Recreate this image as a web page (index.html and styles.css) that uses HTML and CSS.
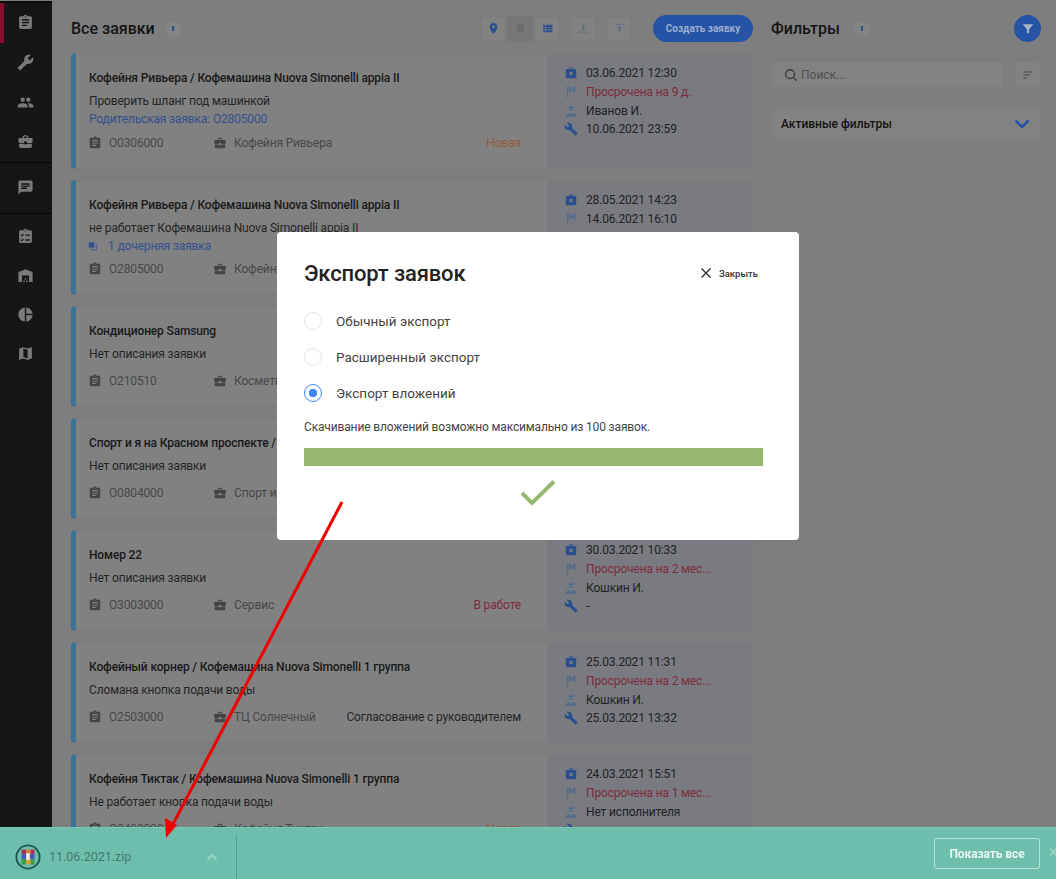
FILE: index.html
```html
<!DOCTYPE html>
<html lang="ru">
<head>
  <meta charset="UTF-8" />
  <meta name="viewport" content="width=device-width, initial-scale=1.0"/>
  <title>Все заявки</title>
  <link rel="stylesheet" href="styles.css">
</head>
<body>
  <svg class="sprite" xmlns="http://www.w3.org/2000/svg">
    <symbol id="i-assignment" viewBox="0 0 24 24"><path d="M19 3h-4.18C14.4 1.84 13.3 1 12 1c-1.3 0-2.4.84-2.82 2H5c-1.1 0-2 .9-2 2v14c0 1.1.9 2 2 2h14c1.1 0 2-.9 2-2V5c0-1.1-.9-2-2-2zm-7 0c.55 0 1 .45 1 1s-.45 1-1 1-1-.45-1-1 .45-1 1-1zm2 14H7v-2h7v2zm3-4H7v-2h10v2zm0-4H7V7h10v2z"/></symbol>
    <symbol id="i-wrench" viewBox="0 0 24 24"><path d="M22.7 19l-9.1-9.1c.9-2.3.4-5-1.5-6.9-2-2-5-2.4-7.4-1.3L9 6 6 9 1.6 4.7C.4 7.1.9 10.1 2.9 12.1c1.9 1.9 4.6 2.4 6.9 1.5l9.1 9.1c.4.4 1 .4 1.4 0l2.3-2.3c.5-.4.5-1.1.1-1.4z"/></symbol>
    <symbol id="i-people" viewBox="0 0 24 24"><path d="M16 11c1.66 0 2.99-1.34 2.99-3S17.66 5 16 5c-1.66 0-3 1.34-3 3s1.34 3 3 3zm-8 0c1.66 0 2.99-1.34 2.99-3S9.66 5 8 5C6.34 5 5 6.34 5 8s1.34 3 3 3zm0 2c-2.33 0-7 1.17-7 3.5V19h14v-2.5c0-2.33-4.67-3.5-7-3.5zm8 0c-.29 0-.62.02-.97.05 1.16.84 1.97 1.97 1.97 3.45V19h6v-2.5c0-2.33-4.67-3.5-7-3.5z"/></symbol>
    <symbol id="i-case" viewBox="0 0 24 24"><path d="M10 16v-1H3.01L3 19c0 1.11.89 2 2 2h14c1.11 0 2-.89 2-2v-4h-7v1h-4zm10-9h-4.01V5l-2-2h-4l-2 2v2H4c-1.1 0-2 .9-2 2v3c0 1.11.89 2 2 2h6v-2h4v2h6c1.1 0 2-.9 2-2V9c0-1.1-.9-2-2-2zm-6 0h-4V5h4v2z"/></symbol>
    <symbol id="i-chat" viewBox="0 0 24 24"><path d="M20 2H4c-1.1 0-1.99.9-1.99 2L2 22l4-4h14c1.1 0 2-.9 2-2V4c0-1.1-.9-2-2-2zM6 9h12v2H6V9zm8 5H6v-2h8v2zm4-6H6V6h12v2z"/></symbol>
    <symbol id="i-checklist" viewBox="0 0 24 24"><path fill-rule="evenodd" d="M19 3h-4.180C14.400 1.840 13.300 1 12 1c-1.300 0-2.400.840-2.820 2H5c-1.100 0-2 .900-2 2v14c0 1.100.900 2 2 2h14c1.100 0 2-.900 2-2V5c0-1.100-.900-2-2-2zm-7 0a1 1 0 1 1 0 2 1 1 0 0 1 0-2zM6 9l1 1 2-2 1 1-3 3-2-2zm0 7l1 1 2-2 1 1-3 3-2-2zm6-7h6v2h-6zm0 7h6v2h-6z"/></symbol>
    <symbol id="i-warehouse" viewBox="0 0 24 24"><path d="M22 21V7L12 3 2 7v14h5v-9h10v9h5zm-11-2H9v2h2v-2zm2-3h-2v2h2v-2zm2 3h-2v2h2v-2z"/></symbol>
    <symbol id="i-pie" viewBox="0 0 24 24"><path d="M11 2v20c-5.07-.5-9-4.79-9-10s3.93-9.5 9-10zm2.03 0v8.99H22c-.47-4.74-4.24-8.52-8.97-8.99zm0 11.01V22c4.74-.47 8.5-4.25 8.97-8.99h-8.97z"/></symbol>
    <symbol id="i-map" viewBox="0 0 24 24"><path d="M20.5 3l-.16.03L15 5.1 9 3 3.36 4.9c-.21.07-.36.25-.36.48V20.5c0 .28.22.5.5.5l.16-.03L9 18.9l6 2.1 5.64-1.9c.21-.07.36-.25.36-.48V3.5c0-.28-.22-.5-.5-.5zM15 19l-6-2.11V5l6 2.11V19z"/></symbol>
    <symbol id="i-place" viewBox="0 0 24 24"><path d="M12 2C8.13 2 5 5.13 5 9c0 5.25 7 13 7 13s7-7.75 7-13c0-3.87-3.13-7-7-7zm0 9.5c-1.38 0-2.5-1.12-2.5-2.5s1.12-2.5 2.5-2.5 2.5 1.12 2.5 2.5-1.12 2.5-2.5 2.5z"/></symbol>
    <symbol id="i-square" viewBox="0 0 24 24"><path d="M4 4h16v16H4z"/></symbol>
    <symbol id="i-list" viewBox="0 0 24 24"><path d="M4 14h4v-4H4v4zm0 5h4v-4H4v4zM4 9h4V5H4v4zm5 5h12v-4H9v4zm0 5h12v-4H9v4zM9 5v4h12V5H9z"/></symbol>
    <symbol id="i-down" viewBox="0 0 24 24"><path d="M11 4h2v7h3l-4 4-4-4h3zM3 18h18v1.5H3z"/></symbol>
    <symbol id="i-up" viewBox="0 0 24 24"><path d="M3 4h18v1.5H3zM12 8l4 4h-3v7h-2v-7H8z"/></symbol>
    <symbol id="i-filter" viewBox="0 0 24 24"><path d="M3 4h18l-7 8.5V20l-4-2v-5.500z"/></symbol>
    <symbol id="i-sort" viewBox="0 0 24 24"><path d="M3 5h18v2H3zm0 6h12v2H3zm0 6h6v2H3z"/></symbol>
    <symbol id="i-created" viewBox="0 0 24 24"><path fill-rule="evenodd" d="M9 2h6v3h4a2 2 0 0 1 2 2v12a2 2 0 0 1-2 2H5a2 2 0 0 1-2-2V7a2 2 0 0 1 2-2h4zm1.500 1.500V5h3V3.500zM12 10a3 3 0 1 0 0 6 3 3 0 0 0 0-6z"/></symbol>
    <symbol id="i-flag" viewBox="0 0 24 24"><path fill-rule="evenodd" d="M5 2h2v20H5zM8 3h4v3h4V3h5l-2 5 2 5h-5v-3h-4v3H8z"/></symbol>
    <symbol id="i-worker" viewBox="0 0 24 24"><path d="M12 2l1 1.500 4 1.500v2H7V5l4-1.500zM8 8h8a4 4 0 0 1-8 0zM3 22c0-4 3-7 6-7l3 3 3-3c3 0 6 3 6 7z"/></symbol>
    <symbol id="i-linked" viewBox="0 0 24 24"><path d="M2 3h13v13H2z"/><path d="M17 9h5v13H9v-5h1.500v3.500h10v-10H17z"/></symbol>
  </svg>

  <div class="app">
    <nav class="sidebar">
      <div class="nav-group nav-main">
        <a class="nav-item active"><svg class="nav-icon"><use href="#i-assignment"/></svg></a>
        <a class="nav-item"><svg class="nav-icon flip"><use href="#i-wrench"/></svg></a>
        <a class="nav-item"><svg class="nav-icon"><use href="#i-people"/></svg></a>
        <a class="nav-item"><svg class="nav-icon"><use href="#i-case"/></svg></a>
      </div>
      <div class="nav-group nav-chat">
        <a class="nav-item"><svg class="nav-icon"><use href="#i-chat"/></svg></a>
      </div>
      <div class="nav-group nav-extra">
        <a class="nav-item"><svg class="nav-icon"><use href="#i-checklist"/></svg></a>
        <a class="nav-item"><svg class="nav-icon"><use href="#i-warehouse"/></svg></a>
        <a class="nav-item"><svg class="nav-icon"><use href="#i-pie"/></svg></a>
        <a class="nav-item"><svg class="nav-icon"><use href="#i-map"/></svg></a>
      </div>
    </nav>

    <main class="orders">
      <header class="head">
        <h2 class="head-title">Все заявки</h2>
        <span class="count"><i></i></span>
        <div class="tools">
          <div class="tool-group">
            <button class="tool"><svg><use href="#i-place"/></svg></button>
            <button class="tool selected"><svg><use href="#i-square"/></svg></button>
            <button class="tool"><svg><use href="#i-list"/></svg></button>
          </div>
          <button class="tool faint"><svg><use href="#i-down"/></svg></button>
          <button class="tool faint"><svg><use href="#i-up"/></svg></button>
          <button class="create">Создать заявку</button>
        </div>
      </header>

      <article class="card">
        <div class="card-body">
          <div class="card-title">Кофейня Ривьера / Кофемашина Nuova Simonelli appia II</div>
          <div class="card-desc">Проверить шланг под машинкой</div>
          <div class="card-link">Родительская заявка: O2805000</div>
          <div class="card-meta">
            <span class="meta-id"><svg><use href="#i-assignment"/></svg>O0306000</span>
            <span class="meta-place"><svg><use href="#i-case"/></svg>Кофейня Ривьера</span>
            <span class="status new">Новая</span>
          </div>
        </div>
        <div class="card-side">
          <div class="side-row"><svg class="blue"><use href="#i-created"/></svg><span>03.06.2021 12:30</span></div>
          <div class="side-row"><svg class="pale"><use href="#i-flag"/></svg><span class="late">Просрочена на 9 д.</span></div>
          <div class="side-row"><svg class="pale"><use href="#i-worker"/></svg><span>Иванов И.</span></div>
          <div class="side-row"><svg class="blue"><use href="#i-wrench"/></svg><span>10.06.2021 23:59</span></div>
        </div>
      </article>

      <article class="card">
        <div class="card-body">
          <div class="card-title">Кофейня Ривьера / Кофемашина Nuova Simonelli appia II</div>
          <div class="card-desc">не работает Кофемашина Nuova Simonelli appia II</div>
          <div class="card-link"><svg><use href="#i-linked"/></svg>1 дочерняя заявка</div>
          <div class="card-meta">
            <span class="meta-id"><svg><use href="#i-assignment"/></svg>O2805000</span>
            <span class="meta-place"><svg><use href="#i-case"/></svg>Кофейня Ривьера</span>
          </div>
        </div>
        <div class="card-side">
          <div class="side-row"><svg class="blue"><use href="#i-created"/></svg><span>28.05.2021 14:23</span></div>
          <div class="side-row"><svg class="pale"><use href="#i-flag"/></svg><span>14.06.2021 16:10</span></div>
        </div>
      </article>

      <article class="card">
        <div class="card-body">
          <div class="card-title">Кондиционер Samsung</div>
          <div class="card-desc">Нет описания заявки</div>
          <div class="card-meta">
            <span class="meta-id"><svg><use href="#i-assignment"/></svg>O210510</span>
            <span class="meta-place"><svg><use href="#i-case"/></svg>Косметика</span>
          </div>
        </div>
        <div class="card-side"></div>
      </article>

      <article class="card">
        <div class="card-body">
          <div class="card-title">Спорт и я на Красном проспекте /</div>
          <div class="card-desc">Нет описания заявки</div>
          <div class="card-meta">
            <span class="meta-id"><svg><use href="#i-assignment"/></svg>O0804000</span>
            <span class="meta-place"><svg><use href="#i-case"/></svg>Спорт и я</span>
          </div>
        </div>
        <div class="card-side"></div>
      </article>

      <article class="card">
        <div class="card-body">
          <div class="card-title">Номер 22</div>
          <div class="card-desc">Нет описания заявки</div>
          <div class="card-meta">
            <span class="meta-id"><svg><use href="#i-assignment"/></svg>O3003000</span>
            <span class="meta-place"><svg><use href="#i-case"/></svg>Сервис</span>
            <span class="status work">В работе</span>
          </div>
        </div>
        <div class="card-side">
          <div class="side-row"><svg class="blue"><use href="#i-created"/></svg><span>30.03.2021 10:33</span></div>
          <div class="side-row"><svg class="pale"><use href="#i-flag"/></svg><span class="late">Просрочена на 2 мес...</span></div>
          <div class="side-row"><svg class="pale"><use href="#i-worker"/></svg><span>Кошкин И.</span></div>
          <div class="side-row"><svg class="blue"><use href="#i-wrench"/></svg><span>-</span></div>
        </div>
      </article>

      <article class="card">
        <div class="card-body">
          <div class="card-title">Кофейный корнер / Кофемашина Nuova Simonelli 1 группа</div>
          <div class="card-desc">Сломана кнопка подачи воды</div>
          <div class="card-meta">
            <span class="meta-id"><svg><use href="#i-assignment"/></svg>O2503000</span>
            <span class="meta-place"><svg><use href="#i-case"/></svg>ТЦ Солнечный</span>
            <span class="status">Согласование с руководителем</span>
          </div>
        </div>
        <div class="card-side">
          <div class="side-row"><svg class="blue"><use href="#i-created"/></svg><span>25.03.2021 11:31</span></div>
          <div class="side-row"><svg class="pale"><use href="#i-flag"/></svg><span class="late">Просрочена на 2 мес...</span></div>
          <div class="side-row"><svg class="pale"><use href="#i-worker"/></svg><span>Кошкин И.</span></div>
          <div class="side-row"><svg class="blue"><use href="#i-wrench"/></svg><span>25.03.2021 13:32</span></div>
        </div>
      </article>

      <article class="card">
        <div class="card-body">
          <div class="card-title">Кофейня Тиктак / Кофемашина Nuova Simonelli 1 группа</div>
          <div class="card-desc">Не работает кнопка подачи воды</div>
          <div class="card-meta">
            <span class="meta-id"><svg><use href="#i-assignment"/></svg>O2403000</span>
            <span class="meta-place"><svg><use href="#i-case"/></svg>Кофейня Тиктак</span>
            <span class="status new">Новая</span>
          </div>
        </div>
        <div class="card-side">
          <div class="side-row"><svg class="blue"><use href="#i-created"/></svg><span>24.03.2021 15:51</span></div>
          <div class="side-row"><svg class="pale"><use href="#i-flag"/></svg><span class="late">Просрочена на 1 мес...</span></div>
          <div class="side-row"><svg class="pale"><use href="#i-worker"/></svg><span>Нет исполнителя</span></div>
          <div class="side-row"><svg class="blue"><use href="#i-wrench"/></svg><span>-</span></div>
        </div>
      </article>
    </main>

    <aside class="filters">
      <header class="head">
        <h2 class="head-title">Фильтры</h2>
        <span class="count"><i></i></span>
        <button class="filter-btn"><svg><use href="#i-filter"/></svg></button>
      </header>
      <div class="search-row">
        <div class="search">
          <svg viewBox="0 0 16 16"><circle cx="7" cy="7" r="5"/><path d="M11 11l3.500 3.500"/></svg>
          <span>Поиск...</span>
        </div>
        <button class="sort"><svg><use href="#i-sort"/></svg></button>
      </div>
      <div class="active-filters">
        <span>Активные фильтры</span>
        <svg viewBox="0 0 16 10"><path d="M1.500 1.500L8 8l6.500-6.500"/></svg>
      </div>
    </aside>
  </div>

  <section class="modal">
    <div class="modal-head">
      <h1>Экспорт заявок</h1>
      <button class="modal-close">
        <svg viewBox="0 0 10 10"><path d="M.5.5l9 9M9.500.5l-9 9"/></svg>
        Закрыть
      </button>
    </div>
    <div class="radio-list">
      <div class="radio"><span class="radio-mark"></span>Обычный экспорт</div>
      <div class="radio"><span class="radio-mark"></span>Расширенный экспорт</div>
      <div class="radio"><span class="radio-mark checked"></span>Экспорт вложений</div>
    </div>
    <p class="modal-note">Скачивание вложений возможно максимально из 100 заявок.</p>
    <div class="progress"></div>
    <svg class="done" viewBox="0 0 36 26"><path d="M2 13l10 10L34 1.500"/></svg>
  </section>

  <footer class="downloads">
    <div class="file">
      <svg class="file-icon" viewBox="0 0 28 28">
        <circle cx="14" cy="14" r="12.500" fill="none" stroke="#1d5a50" stroke-width="2"/>
        <rect x="7" y="6" width="5" height="5" fill="#a8325e"/>
        <rect x="12" y="6" width="5" height="5" fill="#d8803a"/>
        <rect x="17" y="6" width="4" height="5" fill="#a8325e"/>
        <rect x="7" y="11" width="14" height="5" fill="#4a55b8"/>
        <rect x="7" y="16" width="5" height="6" fill="#3c9a4a"/>
        <rect x="12" y="16" width="5" height="6" fill="#d8a23a"/>
        <rect x="17" y="16" width="4" height="6" fill="#3c9a4a"/>
        <rect x="12" y="10" width="4" height="7" fill="#f2ece0"/>
      </svg>
      <span class="file-name">11.06.2021.zip</span>
      <svg class="file-more" viewBox="0 0 12 8"><path d="M1.500 6.500L6 2l4.500 4.500"/></svg>
    </div>
    <button class="show-all">Показать все</button>
    <span class="bar-close">×</span>
  </footer>

  <svg class="arrow" viewBox="0 0 1056 879">
    <line x1="342" y1="502" x2="172" y2="826"/>
    <polygon points="166,838 165,818 177,825"/>
  </svg>
</body>
</html>
```

FILE: styles.css
```css
* {
  box-sizing: border-box;
}
body {
  margin: 0;
  height: 100vh;
  overflow: hidden;
  font-family: 'Roboto', sans-serif;
  font-size: 12px;
  background: #7e7e7e;
  color: #1c1c1c;
}
button {
  font-family: inherit;
  border: none;
  padding: 0;
  cursor: pointer;
}
.sprite {
  display: none;
}
.app {
  display: flex;
  height: 100%;
}

/* sidebar */
.sidebar {
  width: 52px;
  flex: none;
  margin-top: 1px;
  background: #161616;
  border-top: 2px solid #0a0a0a;
}
.nav-group + .nav-group {
  border-top: 1px solid #050505;
}
.nav-item {
  position: relative;
  display: flex;
  align-items: center;
  justify-content: center;
  height: 39.700px;
}
.nav-main {
  height: 159px;
}
.nav-chat {
  height: 51px;
}
.nav-chat .nav-item {
  height: 48px;
}
.nav-extra {
  padding-top: 3px;
}
.nav-extra .nav-item {
  height: 39px;
}
.nav-item.active::before {
  content: "";
  position: absolute;
  left: 0;
  top: 0;
  bottom: 0;
  width: 4px;
  background: #8a0c2b;
}
.nav-icon {
  width: 17px;
  height: 17px;
  fill: #7a7a7a;
  margin-right: 1px;
}
.flip {
  transform: scaleX(-1);
}

/* headers */
.head {
  display: flex;
  align-items: center;
  height: 27px;
  margin: 15px 0 11px;
}
.head-title {
  margin: 0;
  font-size: 16px;
  font-weight: 500;
  color: #141414;
}
.count {
  display: flex;
  align-items: center;
  justify-content: center;
  width: 16px;
  height: 16px;
  margin-left: 10px;
  border-radius: 50%;
  background: #848484;
}
.count i {
  width: 2px;
  height: 5px;
  background: #2a4f8e;
}

/* order list */
.orders {
  width: 682px;
  flex: none;
  margin-left: 19px;
}
.tools {
  display: flex;
  align-items: center;
  margin-left: auto;
}
.tool-group {
  display: flex;
  gap: 1px;
}
.tool {
  display: flex;
  align-items: center;
  justify-content: center;
  width: 26px;
  height: 26px;
  margin-left: 10px;
  background: #828282;
  border: 1px solid #7b7b7b;
  border-radius: 2px;
}
.tool-group .tool {
  margin-left: 0;
}
.tool svg {
  width: 13px;
  height: 13px;
  fill: #2a4f8e;
}
.tool.faint svg {
  fill: #566c8e;
}
.tool.selected {
  background: #777;
  border-color: #777;
}
.tool.selected svg {
  width: 11px;
  height: 11px;
  fill: #6c6c6c;
}
.create {
  width: 100px;
  height: 27px;
  margin-left: 21px;
  border-radius: 14px;
  background: #2553a6;
  color: #9aaecf;
  font-size: 10px;
  font-weight: 700;
}
.card {
  display: flex;
  margin-bottom: 11px;
  background: #818181;
  border: 1px solid #7b7b7b;
  border-left: 5px solid #3a7396;
  border-radius: 4px;
  letter-spacing: -0.15px;
}
.card-body {
  flex: 1;
  min-width: 0;
  padding: 15px 26px 16px 13px;
}
.card-title {
  line-height: 18px;
  font-weight: 500;
  color: #1a1a1a;
  white-space: nowrap;
}
.card-desc {
  margin-top: 5px;
  line-height: 18px;
  color: #262626;
  white-space: nowrap;
}
.card-link {
  display: flex;
  align-items: flex-start;
  height: 14.500px;
  line-height: 18px;
  color: #34508f;
}
.card-link svg {
  width: 10px;
  height: 10px;
  margin: 4px 10px 0 -1px;
  fill: #34508f;
}
.card-meta {
  display: flex;
  align-items: center;
  height: 18px;
  margin-top: 9px;
  color: #484848;
}
.meta-id,
.meta-place {
  display: flex;
  align-items: center;
  gap: 7px;
  white-space: nowrap;
}
.meta-id {
  width: 125px;
}
.card-meta svg {
  width: 14px;
  height: 14px;
  margin-left: -1px;
  fill: #444;
}
.status {
  margin-left: auto;
  white-space: nowrap;
  color: #262626;
}
.status.new {
  color: #9a5a40;
}
.status.work {
  color: #7f2c3a;
}
.card-side {
  width: 205px;
  flex: none;
  padding: 10px 0 0 17px;
  background: #797b81;
  border-radius: 0 3px 3px 0;
}
.side-row {
  display: flex;
  align-items: center;
  gap: 8px;
  height: 18.700px;
  color: #222;
}
.side-row svg {
  width: 14px;
  height: 14px;
  flex: none;
}
.side-row span {
  white-space: nowrap;
}
.blue {
  fill: #2a4f8e;
}
.pale {
  fill: #566c8e;
}
.late {
  color: #7f2c3a;
}

/* filters column */
.filters {
  width: 270px;
  flex: none;
  margin-left: 18px;
}
.filters .count {
  margin-left: 14px;
}
.filter-btn {
  display: flex;
  align-items: center;
  justify-content: center;
  width: 27px;
  height: 27px;
  margin-left: auto;
  border-radius: 50%;
  background: #2553a6;
}
.filter-btn svg {
  width: 14px;
  height: 14px;
  fill: #a9b3c4;
}
.search-row {
  display: flex;
  justify-content: space-between;
  margin-top: 19px;
}
.search {
  display: flex;
  align-items: center;
  gap: 3px;
  width: 233px;
  height: 27px;
  padding-left: 12px;
  background: #828282;
  border: 1px solid #7c7c7c;
  border-radius: 2px;
  color: #505050;
}
.search svg {
  width: 14px;
  height: 14px;
  fill: none;
  stroke: #3a3a3a;
  stroke-width: 1.500;
}
.sort {
  display: flex;
  align-items: center;
  justify-content: center;
  width: 27px;
  height: 27px;
  background: #828282;
  border: 1px solid #7c7c7c;
  border-radius: 2px;
}
.sort svg {
  width: 12px;
  height: 12px;
  fill: #4a4a4a;
}
.active-filters {
  display: flex;
  align-items: center;
  justify-content: space-between;
  height: 34px;
  margin-top: 19px;
  padding: 0 10px 0 9px;
  background: #828282;
  border: 1px solid #7c7c7c;
  border-radius: 3px;
  font-weight: 500;
  color: #141414;
}
.active-filters svg {
  width: 16px;
  height: 10px;
  fill: none;
  stroke: #2553a6;
  stroke-width: 2.500;
}

/* modal */
.modal {
  position: fixed;
  left: 277px;
  top: 232px;
  width: 522px;
  height: 308px;
  padding: 0 36px 0 27px;
  background: #fff;
  border-radius: 4px;
}
.modal-head {
  display: flex;
  align-items: center;
  justify-content: space-between;
  height: 80px;
  padding-top: 2px;
}
.modal-head h1 {
  margin: 0;
  font-size: 22px;
  font-weight: 500;
  letter-spacing: -0.15px;
  color: #222;
}
.modal-close {
  display: flex;
  align-items: center;
  gap: 8px;
  margin-right: 5px;
  background: none;
  font-size: 9.500px;
  font-weight: 500;
  color: #333;
}
.modal-close svg {
  width: 10px;
  height: 10px;
  fill: none;
  stroke: #222;
  stroke-width: 1.200;
}
.radio-list {
  margin-top: -9px;
}
.radio {
  display: flex;
  align-items: center;
  gap: 14px;
  height: 36px;
  font-size: 13.500px;
  color: #444;
}
.radio-mark {
  width: 18px;
  height: 18px;
  border: 1px solid #e4e4e4;
  border-radius: 50%;
}
.radio-mark.checked {
  border-color: #4285f4;
  background: radial-gradient(circle, #4285f4 0 4px, #fff 4.500px);
}
.modal-note {
  margin: 7px 0 0;
  line-height: 18px;
  letter-spacing: -0.150px;
  color: #444;
}
.progress {
  height: 18px;
  margin-top: 12px;
  background: #97b871;
}
.done {
  display: block;
  width: 36px;
  height: 26px;
  margin: 14px 0 0 216px;
  fill: none;
  stroke: #97b871;
  stroke-width: 4;
}

/* download bar */
.downloads {
  position: fixed;
  left: 0;
  right: 0;
  bottom: 0;
  display: flex;
  align-items: center;
  height: 52px;
  background: #6dbfac;
  border-top: 1px solid #79c6b4;
}
.file {
  display: flex;
  align-items: center;
  width: 237px;
  height: 44px;
  margin-top: 6px;
  padding-left: 15px;
  border-right: 1px solid #4f9e8c;
}
.file-icon {
  width: 26px;
  height: 26px;
  flex: none;
}
.file-name {
  margin-left: 8px;
  font-size: 12.500px;
  color: #447a6e;
}
.file-more {
  width: 12px;
  height: 8px;
  margin-left: auto;
  margin-right: 18px;
  fill: none;
  stroke: #98d6c7;
  stroke-width: 2;
}
.show-all {
  width: 106px;
  height: 31px;
  margin-left: auto;
  margin-right: 16px;
  background: none;
  border: 1px solid #b6e2d8;
  border-radius: 3px;
  font-size: 12px;
  font-weight: 700;
  letter-spacing: -0.100px;
  color: #e9f6f2;
}
.bar-close {
  position: absolute;
  right: -2px;
  top: 15px;
  font-size: 18px;
  line-height: 18px;
  color: #98d6c7;
}

/* red annotation over the screenshot */
.arrow {
  position: fixed;
  left: 0;
  top: 0;
  width: 1056px;
  height: 879px;
  pointer-events: none;
}
.arrow line {
  stroke: #f00000;
  stroke-width: 3;
}
.arrow polygon {
  fill: #f00000;
}
```
